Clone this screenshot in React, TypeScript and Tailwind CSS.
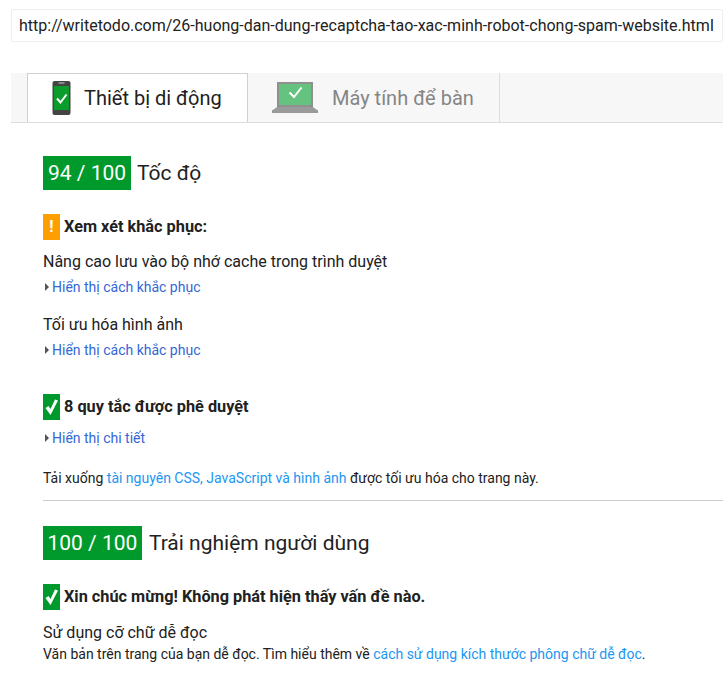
import React from "react";

const font = { fontFamily: "Roboto, sans-serif" };

const CheckMark = () => (
  <svg width="17" height="26" viewBox="0 0 17 26">
    <path d="M2.5 14 L5.5 12 L7.5 15 L12 5.5 L15 6.5 L7.5 21 Z" fill="#fff" />
  </svg>
);

const PhoneIcon = () => (
  <svg width="19" height="34" viewBox="0 0 19 34">
    <rect x="0.5" y="0" width="18" height="34" rx="2" fill="#444" />
    <rect x="6.5" y="1.5" width="6" height="1" fill="#ccc" />
    <rect x="2" y="5" width="15" height="24" fill="#0b9d2c" />
    <path d="M5 17.5 L8.5 21.5 L14.5 13.5" fill="none" stroke="#fff" strokeWidth="2" />
  </svg>
);

const LaptopIcon = () => (
  <svg width="46" height="31" viewBox="0 0 46 31">
    <rect x="5" y="0" width="36" height="25" fill="#8f8f8f" />
    <rect x="7" y="2" width="32" height="21" fill="#66c27f" />
    <path d="M17.5 10.5 L22 15 L29.5 5.5" fill="none" stroke="#fff" strokeWidth="2" />
    <path d="M5 25 H41 L45 28 H1 Z" fill="#9a9a9a" />
    <rect x="0" y="28" width="46" height="3" fill="#9a9a9a" />
  </svg>
);

const Badge = ({ color, children }: { color: string; children: React.ReactNode }) => (
  <div
    className={`w-[17px] h-[26px] flex items-center justify-center text-white font-bold text-[16px] ${color}`}
  >
    {children}
  </div>
);

const Heading = ({ icon, children }: { icon: React.ReactNode; children: React.ReactNode }) => (
  <div className="flex items-center gap-[4px] h-[26px]">
    {icon}
    <span className="font-bold text-[16.3px] text-[#212121] whitespace-nowrap">{children}</span>
  </div>
);

const ToggleLink = ({ children }: { children: React.ReactNode }) => (
  <div className="flex items-center h-[18px] text-[14px] leading-[18px] text-[#3367d6]">
    <span className="w-0 h-0 ml-[2px] mr-[3px] border-y-[4px] border-y-transparent border-l-[4px] border-l-[#555]" />
    <span>{children}</span>
  </div>
);

const Score = ({ value, title, gap, pad }: { value: string; title: string; gap: string; pad: string }) => (
  <div className={`flex items-center h-[34px] ${gap}`}>
    <div className={`h-[34px] bg-[#009a2c] text-white text-[21px] leading-[34px] ${pad}`}>{value}</div>
    <span className="text-[21px] leading-[34px] text-[#212121]">{title}</span>
  </div>
);

export default function App() {
  return (
    <div className="w-[723px] h-[673px] overflow-hidden bg-white" style={font}>
      <div className="pt-[9px] pl-[11px]">
        <div className="h-[33px] border border-[#eeeeee] rounded-[2px] pl-[7px] text-[16px] leading-[31px] text-[#212121] whitespace-nowrap overflow-hidden">
          http://writetodo.com/26-huong-dan-dung-recaptcha-tao-xac-minh-robot-chong-spam-website.html
        </div>
      </div>

      <div className="mt-[31px] ml-[11px] h-[50px] pl-[16px] flex bg-[#f7f7f7] border-b border-[#dddddd]">
        <div className="w-[221px] h-[49px] bg-white border border-b-0 border-[#d0d0d0] flex items-center pl-[24px] gap-[13px]">
          <PhoneIcon />
          <span className="text-[20px] text-[#212121]">Thiết bị di động</span>
        </div>
        <div className="w-[252px] h-[49px] border-r border-[#dddddd] flex items-center pl-[24px] gap-[14px]">
          <LaptopIcon />
          <span className="text-[20px] text-[#858585]">Máy tính để bàn</span>
        </div>
      </div>

      <div className="pl-[43px] pt-[33px]">
        <Score value="94 / 100" title="Tốc độ" gap="gap-[6px]" pad="px-[5px]" />

        <div className="mt-[24px]">
          <Heading icon={<Badge color="bg-[#ff9e00]">!</Badge>}>Xem xét khắc phục:</Heading>
        </div>

        <div className="mt-[11px] text-[16px] leading-[22px] text-[#212121]">Nâng cao lưu vào bộ nhớ cache trong trình duyệt</div>
        <div className="mt-[5px]"><ToggleLink>Hiển thị cách khắc phục</ToggleLink></div>

        <div className="mt-[18px] text-[16px] leading-[22px] text-[#212121]">Tối ưu hóa hình ảnh</div>
        <div className="mt-[5px]"><ToggleLink>Hiển thị cách khắc phục</ToggleLink></div>

        <div className="mt-[35px]">
          <Heading icon={<Badge color="bg-[#009a2c]"><CheckMark /></Badge>}>8 quy tắc được phê duyệt</Heading>
        </div>
        <div className="mt-[9px]"><ToggleLink>Hiển thị chi tiết</ToggleLink></div>

        <div className="mt-[22px] text-[14px] leading-[18px] text-[#212121] whitespace-nowrap">
          Tải xuống <span className="text-[#2196f3]">tài nguyên CSS, JavaScript và hình ảnh</span> được tối ưu hóa cho trang này.
        </div>

        <div className="mt-[13px] border-t border-[#cccccc]" />

        <div className="mt-[25px]">
          <Score value="100 / 100" title="Trải nghiệm người dùng" gap="gap-[7px]" pad="px-[4.5px]" />
        </div>

        <div className="mt-[24px]">
          <Heading icon={<Badge color="bg-[#009a2c]"><CheckMark /></Badge>}>Xin chúc mừng! Không phát hiện thấy vấn đề nào.</Heading>
        </div>

        <div className="mt-[12px] text-[16px] leading-[22px] text-[#212121]">Sử dụng cỡ chữ dễ đọc</div>
        <div className="text-[14px] leading-[18px] mt-[1px] text-[#212121] whitespace-nowrap">
          Văn bản trên trang của bạn dễ đọc. Tìm hiểu thêm về <span className="text-[#2196f3]">cách sử dụng kích thước phông chữ dễ đọc</span>.
        </div>
      </div>
    </div>
  );
}
